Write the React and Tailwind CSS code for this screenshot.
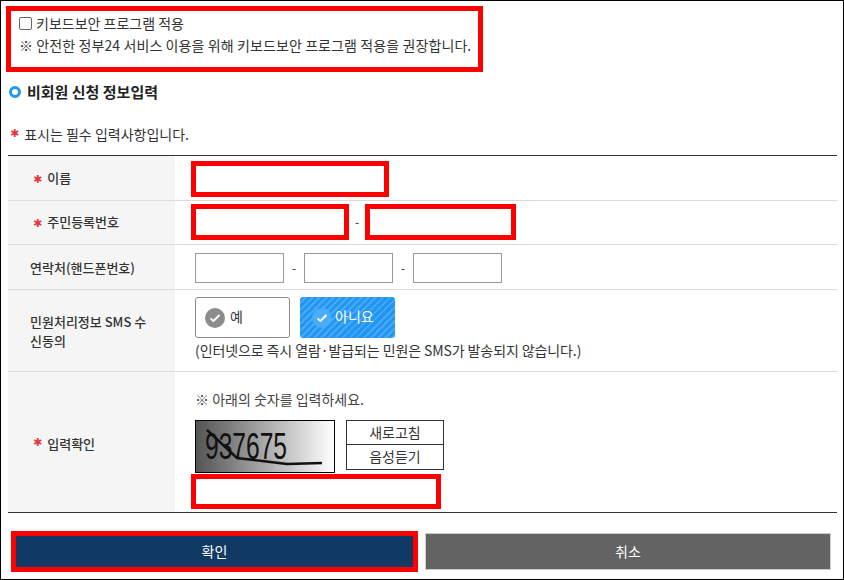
import React from "react";

const font = { fontFamily: '"Noto Sans CJK KR", "Noto Sans", sans-serif' };

function Star() {
  return <span className="mr-[5px] text-[11px] text-[#e0393e]" style={{ fontFamily: "DejaVu Sans" }}>✱</span>;
}

function CheckBadge({ className }) {
  return (
    <span className={`flex h-[20px] w-[20px] items-center justify-center rounded-full ${className}`}>
      <svg width="12" height="10" viewBox="0 0 12 10" fill="none" stroke="#fff" strokeWidth="2">
        <path d="M1.5 5.5 4.5 8 10.5 2" />
      </svg>
    </span>
  );
}

function Row({ label, children, className }) {
  return (
    <div className={`flex border-b border-[#dcdcdc] ${className}`}>
      <div className="flex w-[167px] shrink-0 items-center bg-[#f5f5f5] text-[13px] font-medium text-[#333]">
        {label}
      </div>
      <div className="min-w-0 flex-1">{children}</div>
    </div>
  );
}

export default function App() {
  return (
    <div style={font} className="h-[580px] w-[844px] overflow-hidden border border-black bg-white text-[#333]">
      <div className="ml-[5px] mt-[5px] h-[66px] w-[477px] border-[5px] border-[#ff0000] pl-[8px] pt-[1px] text-[14px] leading-[22px]">
        <label className="flex items-center gap-[4px]">
          <span className="h-[13px] w-[13px] rounded-[2px] border border-[#666] bg-white"></span>
          키보드보안 프로그램 적용
        </label>
        <p className="whitespace-nowrap tracking-[0.1px]">※ 안전한 정부24 서비스 이용을 위해 키보드보안 프로그램 적용을 권장합니다.</p>
      </div>

      <h2 className="ml-[8px] mt-[9px] flex h-[22px] items-center gap-[6px] text-[15px] font-bold text-[#222]">
        <span className="h-[12px] w-[12px] rounded-full border-[3px] border-[#2196f3]"></span>
        비회원 신청 정보입력
      </h2>

      <p className="ml-[9px] mt-[21px] flex h-[20px] items-center text-[14px]">
        <Star />표시는 필수 입력사항입니다.
      </p>

      <div className="ml-[7px] mt-[11px] w-[829px] border-y border-y-[#333]">
        <Row className="h-[45px]" label={<span className="pl-[25px]"><Star />이름</span>}>
          <div className="ml-[16px] pt-[5px]">
            <input className="h-[36px] w-[198px] border-[5px] border-[#ff0000] bg-white" />
          </div>
        </Row>
        <Row className="h-[44px]" label={<span className="pl-[25px]"><Star />주민등록번호</span>}>
          <div className="ml-[16px] flex items-center pt-[3px]">
            <input className="h-[36px] w-[158px] border-[5px] border-[#ff0000] bg-white" />
            <span className="mx-[5px] w-[6px] text-center text-[12px]">-</span>
            <input className="h-[36px] w-[151px] border-[5px] border-[#ff0000] bg-white" />
          </div>
        </Row>
        <Row className="h-[45px]" label={<span className="pl-[22px] pt-[1px]">연락처(핸드폰번호)</span>}>
          <div className="ml-[20px] flex items-center gap-[7px] pt-[8px]">
            <input className="h-[30px] w-[89px] border border-[#999] bg-white" />
            <span className="w-[6px] text-center text-[12px]">-</span>
            <input className="h-[30px] w-[89px] border border-[#999] bg-white" />
            <span className="w-[6px] text-center text-[12px]">-</span>
            <input className="h-[30px] w-[89px] border border-[#999] bg-white" />
          </div>
        </Row>
        <Row
          className="h-[82px]"
          label={<span className="w-[142px] break-all pl-[22px] leading-[19px]">민원처리정보 SMS 수신동의</span>}
        >
          <div className="ml-[20px] pt-[7px]">
            <div className="flex gap-[10px]">
              <button className="flex h-[41px] w-[95px] items-center gap-[5px] rounded-[3px] border border-[#8a8a8a] bg-white pl-[9px] text-[14px]">
                <CheckBadge className="bg-[#8c8c8c]" />
                <span className="pb-[3px]">예</span>
              </button>
              <button className="flex h-[41px] w-[95px] items-center gap-[3px] rounded-[3px] bg-[#2196f3] bg-[repeating-linear-gradient(135deg,#2196f3_0,#2196f3_3px,#47a9f6_3px,#47a9f6_5px)] pl-[12px] text-[14px] text-white">
                <CheckBadge className="bg-[#4aabf7]" />
                <span className="pb-[3px]">아니요</span>
              </button>
            </div>
            <p className="mt-[2px] whitespace-nowrap text-[14px] leading-[20px] tracking-[-0.1px]">
              (인터넷으로 즉시 열람·발급되는 민원은 SMS가 발송되지 않습니다.)
            </p>
          </div>
        </Row>
        <div className="flex h-[140px]">
          <div className="flex w-[167px] shrink-0 items-center bg-[#f5f5f5] pl-[25px] pt-[3px] text-[13px] font-medium">
            <Star />입력확인
          </div>
          <div className="ml-[16px]">
            <p className="ml-[4px] mt-[17px] h-[20px] text-[14px] leading-[20px] text-[#444]">※ 아래의 숫자를 입력하세요.</p>
            <div className="ml-[4px] mt-[11px] flex gap-[11px]">
              <div className="h-[53px] w-[140px] border border-black bg-gradient-to-r from-[#555555] via-[#aaaaaa] to-[#ffffff]">
                <svg width="138" height="51" viewBox="0 0 138 51">
                  <text x="9" y="38" fontFamily="Liberation Sans, sans-serif" fontSize="36" fill="#111" textLength="82" lengthAdjust="spacingAndGlyphs">
                    937675
                  </text>
                  <path d="M11 9 41 37 91 43 126 42" fill="none" stroke="#111" strokeWidth="2.5" />
                </svg>
              </div>
              <div className="w-[98px]">
                <button className="block h-[25px] w-full border border-[#333] bg-white pb-[2px] text-[14px] leading-none">새로고침</button>
                <button className="-mt-[1px] block h-[26px] w-full border border-[#333] bg-white pb-[2px] text-[14px] leading-none">음성듣기</button>
              </div>
            </div>
            <input className="mt-[1px] block h-[35px] w-[250px] border-[5px] border-[#ff0000] bg-white" />
          </div>
        </div>
      </div>

      <div className="ml-[10px] mt-[18px] flex items-center gap-[7px]">
        <button className="h-[41px] w-[407px] border-[5px] border-[#ff0000] bg-[#103a63] text-[14px] text-white">확인</button>
        <button className="h-[37px] w-[406px] border border-[#cccccc] bg-[#636363] text-[14px] text-white">취소</button>
      </div>
    </div>
  );
}
